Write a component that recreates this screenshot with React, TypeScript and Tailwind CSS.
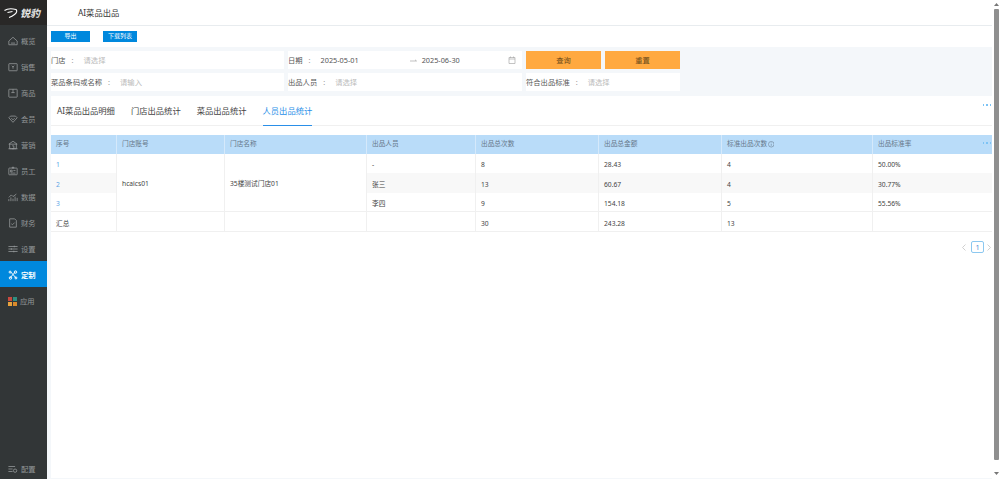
import React from 'react';

const NavIcon = ({ name }: { name: string }) => {
  const common = { width: 10, height: 10, viewBox: '0 0 12 12', fill: 'none', stroke: '#9a9ea0', strokeWidth: 0.9 };
  switch (name) {
    case '概览':
      return <svg {...common}><path d="M1 6L6 1.500l5 4.500v4.500H1zM3.500 8.500h5" /></svg>;
    case '销售':
      return <svg {...common}><rect x="1" y="2" width="10" height="8.500" rx="0.500" /><path d="M4.500 4.500L6 6l1.500-1.500M6 6v2" /></svg>;
    case '商品':
      return <svg {...common}><rect x="1" y="1.500" width="10" height="9.500" rx="0.500" /><path d="M6 1.500v4M4 5.500h4" /></svg>;
    case '会员':
      return <svg {...common}><path d="M1 4.500L3 2.500h6l2 2L6 10zM4 5l2 2 2-2" /></svg>;
    case '营销':
      return <svg {...common}><path d="M1 5l5-3.500L11 5zM2 5v5.500h8V5M5 7h2v3.500H5M.5 10.500h11" /></svg>;
    case '员工':
      return <svg {...common}><rect x="1" y="2.500" width="10" height="8" rx="0.500" /><path d="M5 1.500h2v1H5zM3 5h2v2H3zM6.500 5.500h2.500M3 8.500h6" /></svg>;
    case '数据':
      return <svg {...common}><path d="M1 11V8.500M3.500 11V6.500M6 11V8M8.500 11V5.500M11 11V7M1 6.500l3-3 2 2 4-3" /></svg>;
    case '财务':
      return <svg {...common}><path d="M2 1h6l2 2v8H2zM4 7l1.500 1L8 5.500" /></svg>;
    case '设置':
      return <svg {...common}><path d="M.5 3h11M.5 6h11M.5 9h11M7.500 2v2M4 5v2M7 8v2" /></svg>;
    case '定制':
      return <svg {...common} stroke="#ffffff" strokeWidth={1.100}><path d="M3 2l7 8M9 2l-7 8" /><circle cx="9" cy="2.500" r="1.500" /><circle cx="3" cy="9.500" r="1.500" /><circle cx="9.500" cy="9.500" r="1.200" /><circle cx="2.500" cy="2.500" r="1.200" /></svg>;
    case '应用':
      return (
        <svg width="9" height="9" viewBox="0 0 9 9">
          <rect x="0" y="0" width="4" height="4" fill="#c9493f" />
          <rect x="5" y="0" width="4" height="4" fill="#2f8f80" />
          <rect x="0" y="5" width="4" height="4" fill="#e8a33d" />
          <rect x="5" y="5" width="4" height="4" fill="#d98a2b" />
        </svg>
      );
    default:
      return <svg {...common}><path d="M.5 3h8M.5 6h5M.5 9h5" /><circle cx="8.500" cy="8" r="2" /></svg>;
  }
};

const navItems = ['概览', '销售', '商品', '会员', '营销', '员工', '数据', '财务', '设置', '定制', '应用'];

const NavItem = ({ label }: { label: string }) => {
  const active = label === '定制';
  return (
    <div className={`h-[26px] shrink-0 flex items-center pt-[2px] pl-[8px] gap-[3px] text-[7.3px] ${active ? 'bg-[#0088dd] text-white font-bold' : 'text-[#929698]'}`}>
      <NavIcon name={label} />
      <span>{label}</span>
    </div>
  );
};

const Dots = () => (
  <div className="flex gap-[2px]">
    <span className="w-[1.500px] h-[1.500px] bg-[#7cc3f5]" />
    <span className="w-[1.500px] h-[1.500px] bg-[#7cc3f5]" />
    <span className="w-[1.500px] h-[1.500px] bg-[#7cc3f5]" />
  </div>
);

const Field = ({ label, placeholder, width }: { label: string; placeholder: string; width: string }) => (
  <div className={`${width} h-[18px] bg-white flex items-center text-[7.3px] text-[#555]`}>
    <span>{label}</span>
    <span className="text-[#999] ml-[6px] mr-[10px]">:</span>
    <span className="text-[#bbb]">{placeholder}</span>
  </div>
);

const columns = [
  { title: '序号', w: 'w-[66px]' },
  { title: '门店账号', w: 'w-[108px]' },
  { title: '门店名称', w: 'w-[142px]' },
  { title: '出品人员', w: 'w-[109px]' },
  { title: '出品总次数', w: 'w-[123px]' },
  { title: '出品总金额', w: 'w-[123px]' },
  { title: '标准出品次数', w: 'w-[151px]' },
  { title: '出品标准率', w: 'flex-1' },
];

const rows = [
  { no: '1', person: '-', count: '8', amount: '28.43', std: '4', rate: '50.00%', bg: 'bg-white', h: 'h-[19px]' },
  { no: '2', person: '张三', count: '13', amount: '60.67', std: '4', rate: '30.77%', bg: 'bg-[#f8f8f8]', h: 'h-[20px]' },
  { no: '3', person: '李四', count: '9', amount: '154.18', std: '5', rate: '55.56%', bg: 'bg-white', h: 'h-[18px]' },
];

const Cell = ({ w, children, right = true, pt = 'pt-[4px]' }: { w: string; children?: React.ReactNode; right?: boolean; pt?: string }) => (
  <div className={`${w} h-full flex items-center pl-[5px] ${pt} ${right ? 'border-r border-[#f0f0f0]' : ''}`}>{children}</div>
);

export default function App() {
  return (
    <div className="flex h-[479px] w-[1000px] overflow-hidden bg-white antialiased font-['Noto_Sans','Noto_Sans_CJK_SC',sans-serif]">
      <aside className="w-[47px] shrink-0 bg-[#323637] flex flex-col overflow-hidden">
        <div className="h-[25px] shrink-0 bg-[#292827] flex items-center pl-[4px] gap-[2px] mb-[2px]">
          <svg width="14" height="10" viewBox="0 0 14 10" fill="none" stroke="#ffffff" strokeWidth="1.100">
            <path d="M.5 2.500C3 .8 8 .5 12 1.500c1.500 1.500.5 3.500-1.500 5C9 7.700 7 8.800 5 9.500M3.500 4.500L8.500 3.500" />
          </svg>
          <span className="text-[10px] leading-[10px] font-bold italic text-[#e8e8e8]">锐豹</span>
        </div>
        {navItems.map((n) => (
          <NavItem key={n} label={n} />
        ))}
        <div className="mt-auto mb-[-2px]">
          <NavItem label="配置" />
        </div>
      </aside>

      <main className="w-[945px] shrink-0 flex flex-col">
        <div className="h-[26px] shrink-0 flex items-center pl-[31px] pt-[2px] text-[8.300px] text-[#333] border-b border-[#e8ecef]">AI菜品出品</div>
        <div className="h-[21px] shrink-0 flex items-start pt-[5px] pl-[4px] gap-[13px]">
          <div className="w-[39px] h-[11px] bg-[#0088dd] text-white text-[6px] flex items-center justify-center">导出</div>
          <div className="w-[34px] h-[11px] bg-[#0088dd] text-white text-[6px] flex items-center justify-center">下载列表</div>
        </div>

        <div className="flex-1 min-h-0 flex flex-col bg-[#f4f7fa] pl-[4px] pb-[1px]">
          <div className="h-[49px] shrink-0 pt-[4px] flex flex-col gap-[4px]">
            <div className="flex gap-[4px]">
              <Field label="门店" placeholder="请选择" width="w-[233px]" />
              <div className="w-[234px] h-[18px] bg-white flex items-center text-[7.3px] text-[#555]">
                <span>日期</span>
                <span className="text-[#999] ml-[6px] mr-[10px]">:</span>
                <span>2025-05-01</span>
                <svg className="ml-[51px] mr-[5px]" width="7" height="4" viewBox="0 0 7 4" fill="none" stroke="#999" strokeWidth="0.600">
                  <path d="M0 3h6.500L5 1.800" />
                </svg>
                <span>2025-06-30</span>
                <svg className="ml-auto mr-[6px]" width="8" height="8" viewBox="0 0 8 8" fill="none" stroke="#aaa" strokeWidth="0.700">
                  <path d="M1 1.500h6v6H1zM1 3h6M2.500 .5v1.500M5.500 .5v1.500" />
                </svg>
              </div>
              <div className="w-[75px] h-[18px] bg-[#ffa940] text-[#6a4a1a] text-[7.3px] flex items-center justify-center">查询</div>
              <div className="w-[75px] h-[18px] bg-[#ffa940] text-[#6a4a1a] text-[7.3px] flex items-center justify-center">重置</div>
            </div>
            <div className="flex gap-[4px]">
              <Field label="菜品条码或名称" placeholder="请输入" width="w-[233px]" />
              <Field label="出品人员" placeholder="请选择" width="w-[234px]" />
              <Field label="符合出品标准" placeholder="请选择" width="w-[154px]" />
            </div>
          </div>

          <div className="flex-1 min-h-0 bg-white relative">
            <div className="h-[30px] flex gap-[16px] pl-[6px] border-b border-[#f0f0f0] text-[8.300px] text-[#444]">
              <span className="h-[30px] leading-[30px]">AI菜品出品明细</span>
              <span className="h-[30px] leading-[30px]">门店出品统计</span>
              <span className="h-[30px] leading-[30px]">菜品出品统计</span>
              <span className="h-[30px] leading-[30px] text-[#2a8fe8] border-b border-[#2a8fe8]">人员出品统计</span>
            </div>
            <div className="absolute right-[1px] top-[8px]">
              <Dots />
            </div>

            <div className="mt-[9px] text-[6.700px] text-[#444]">
              <div className="relative h-[19px] flex bg-[#b9dcf9] text-[#66788a]">
                {columns.map((c, i) => (
                  <div key={c.title} className={`${c.w} h-full flex items-center pl-[5px] ${i < 7 ? 'border-r border-[#d5e9fb]' : ''}`}>
                    {c.title}
                    {i === 6 && (
                      <svg className="ml-[0.500px]" width="6.500" height="6.500" viewBox="0 0 7 7" fill="none" stroke="#66788a" strokeWidth="0.600">
                        <circle cx="3.500" cy="3.500" r="3" />
                        <path d="M3.500 3v2.200M3.500 1.600v.7" />
                      </svg>
                    )}
                  </div>
                ))}
                <div className="absolute right-[1px] top-[7px]">
                  <Dots />
                </div>
              </div>

              <div className="flex h-[58px] border-b border-[#f0f0f0]">
                <div className="w-[66px] flex flex-col shrink-0">
                  {rows.map((r) => (
                    <div key={r.no} className={`${r.h} ${r.bg} flex items-center pl-[5px] pt-[4px] text-[#5aa5e6] border-r border-[#f0f0f0]`}>{r.no}</div>
                  ))}
                </div>
                <div className="w-[108px] flex items-center pl-[5px] pt-[4px] shrink-0 border-r border-[#f0f0f0]">hcaics01</div>
                <div className="w-[142px] flex items-center pl-[5px] pt-[4px] shrink-0 border-r border-[#f0f0f0]">35楼测试门店01</div>
                <div className="flex-1 flex flex-col">
                  {rows.map((r) => (
                    <div key={r.no} className={`${r.h} ${r.bg} flex items-center`}>
                      <Cell w="w-[109px]">{r.person}</Cell>
                      <Cell w="w-[123px]">{r.count}</Cell>
                      <Cell w="w-[123px]">{r.amount}</Cell>
                      <Cell w="w-[151px]">{r.std}</Cell>
                      <Cell w="flex-1" right={false}>{r.rate}</Cell>
                    </div>
                  ))}
                </div>
              </div>

              <div className="flex h-[20px] border-b border-[#f0f0f0]">
                <Cell w="w-[66px]" pt="pt-[5px]">汇总</Cell>
                <Cell w="w-[108px]" />
                <Cell w="w-[142px]" />
                <Cell w="w-[109px]" />
                <Cell w="w-[123px]" pt="pt-[5px]">30</Cell>
                <Cell w="w-[123px]" pt="pt-[5px]">243.28</Cell>
                <Cell w="w-[151px]" pt="pt-[5px]">13</Cell>
                <Cell w="flex-1" right={false} />
              </div>
            </div>

            <div className="flex justify-end items-center mt-[9px] pr-[1px]">
              <svg width="4" height="7" viewBox="0 0 4 7" fill="none" stroke="#c4c4c4" strokeWidth="0.800">
                <path d="M3.500 .5L.5 3.500l3 3" />
              </svg>
              <span className="ml-[5px] w-[13px] h-[12px] flex items-center justify-center border border-[#8cc8f0] rounded-[2px] text-[7.300px] text-[#4a90d9]">1</span>
              <svg className="ml-[3px]" width="4" height="7" viewBox="0 0 4 7" fill="none" stroke="#c4c4c4" strokeWidth="0.800">
                <path d="M.5 .5l3 3-3 3" />
              </svg>
            </div>
          </div>
        </div>
      </main>

      <div className="w-[8px] shrink-0 bg-white flex flex-col items-center pl-[1px] pt-[3px] pb-[4px]">
        <svg width="5" height="3" viewBox="0 0 5 3"><path d="M0 3L2.500 0 5 3z" fill="#777" /></svg>
        <div className="mt-[3px] w-[5px] h-[451px] rounded-[1px] bg-[#8f8f8f]" />
        <svg className="mt-auto" width="5" height="3" viewBox="0 0 5 3"><path d="M0 0h5L2.500 3z" fill="#777" /></svg>
      </div>
    </div>
  );
}
